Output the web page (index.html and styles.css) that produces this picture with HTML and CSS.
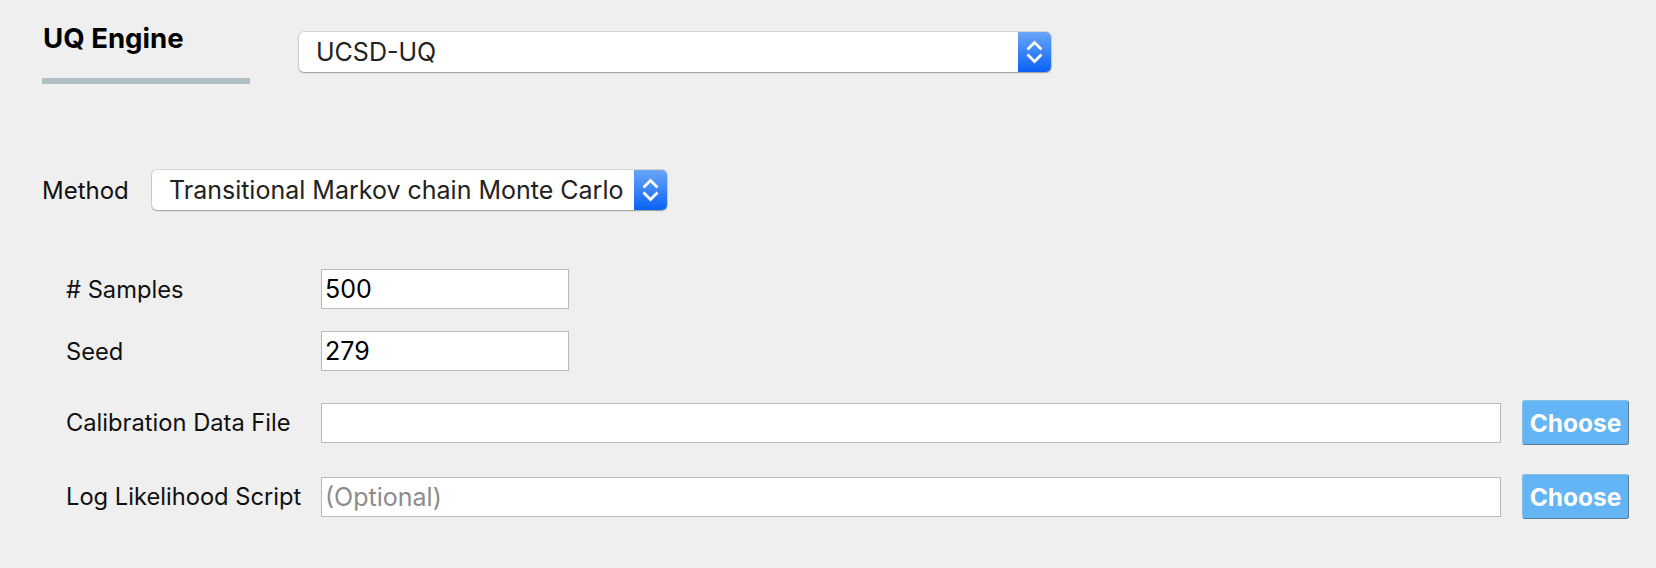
FILE: index.html
```html
<!DOCTYPE html>
<html lang="en">
<head>
<meta charset="utf-8">
<title>UQ Engine</title>
<link rel="stylesheet" href="styles.css">
</head>
<body>
<div class="page">
  <div class="header">
    <div class="tab">
      <div class="tab-title">UQ Engine</div>
      <div class="tab-bar"></div>
    </div>
    <div class="combo combo-engine">
      <span class="combo-text">UCSD-UQ</span>
      <span class="combo-arrows">
        <svg width="33" height="40" viewBox="0 0 33 40"><polyline points="9.5,17.5 16.5,10.5 23.5,17.5" fill="none" stroke="#fff" stroke-width="2.7"/><polyline points="9.5,22.5 16.5,29.5 23.5,22.5" fill="none" stroke="#fff" stroke-width="2.7"/></svg>
      </span>
    </div>
  </div>

  <div class="method-row">
    <span class="method-label">Method</span>
    <div class="combo combo-method">
      <span class="combo-text">Transitional Markov chain Monte Carlo</span>
      <span class="combo-arrows">
        <svg width="33" height="40" viewBox="0 0 33 40"><polyline points="9.5,17.5 16.5,10.5 23.5,17.5" fill="none" stroke="#fff" stroke-width="2.7"/><polyline points="9.5,22.5 16.5,29.5 23.5,22.5" fill="none" stroke="#fff" stroke-width="2.7"/></svg>
      </span>
    </div>
  </div>

  <div class="form">
    <div class="group group-short">
      <div class="row">
        <span class="label"># Samples</span>
        <div class="field field-short">500</div>
      </div>
      <div class="row">
        <span class="label">Seed</span>
        <div class="field field-short">279</div>
      </div>
    </div>
    <div class="group group-file">
      <div class="row row-file">
        <span class="label">Calibration Data File</span>
        <div class="field field-long"></div>
        <button class="choose">Choose</button>
      </div>
      <div class="row row-file">
        <span class="label">Log Likelihood Script</span>
        <div class="field field-long placeholder">(Optional)</div>
        <button class="choose">Choose</button>
      </div>
    </div>
  </div>
</div>
</body>
</html>
```
FILE: styles.css
```css
html, body {
  margin: 0;
  padding: 0;
  background: #efefef;
}
body {
  font-family: Inter, "Liberation Sans", sans-serif;
  color: #111;
  width: 1656px;
  height: 568px;
  overflow: hidden;
}
.page {
  display: flex;
  flex-direction: column;
}
.header {
  display: flex;
  align-items: flex-start;
  padding-left: 42px;
}
.tab {
  width: 208px;
  display: flex;
  flex-direction: column;
}
.tab-title {
  font-weight: 700;
  font-size: 27.6px;
  line-height: 33px;
  margin-top: 22px;
  padding-left: 1px;
  color: #000;
}
.tab-bar {
  height: 6px;
  background: #b0bec5;
  margin-top: 23px;
}
.combo {
  display: flex;
  align-items: center;
  height: 40px;
  background: #fff;
  border-radius: 5px;
  box-shadow: 0 0 0 1px rgba(0,0,0,0.10), 0 1px 1.5px rgba(0,0,0,0.28);
  overflow: hidden;
}
.combo-text {
  flex: 1;
  padding-left: 17px;
  font-size: 25px;
  color: #222;
  white-space: nowrap;
}
.combo-arrows {
  width: 33px;
  height: 40px;
  flex: none;
  background: linear-gradient(#6aa6f8, #0962f6);
}
.combo-arrows svg {
  display: block;
}
.combo-engine {
  width: 752px;
  margin-left: 49px;
  margin-top: 32px;
}
.method-row {
  display: flex;
  align-items: center;
  margin-top: 86px;
  padding-left: 42px;
}
.method-label {
  width: 110px;
  font-size: 24px;
  color: #111;
}
.combo-method {
  width: 515px;
}
.form {
  display: flex;
  flex-direction: column;
  gap: 29px;
  margin-top: 59px;
  padding-left: 66px;
}
.group {
  display: flex;
  flex-direction: column;
}
.group-short {
  gap: 22px;
}
.group-file {
  gap: 29px;
}
.row {
  display: flex;
  align-items: center;
}
.row-file {
  height: 45px;
}
.label {
  width: 255px;
  flex: none;
  font-size: 23.7px;
  color: #111;
}
.field {
  box-sizing: border-box;
  height: 40px;
  background: #fff;
  border: 1px solid #b9b9b9;
  padding-left: 3px;
  font-size: 25px;
  line-height: 38px;
  color: #000;
}
.field-short {
  width: 248px;
}
.field-long {
  width: 1180px;
}
.placeholder {
  color: #8c8c8c;
}
.choose {
  box-sizing: border-box;
  margin-left: 21px;
  width: 107px;
  height: 45px;
  padding: 0;
  background: #63b5f6;
  border: 1px solid #5a7d94;
  border-top-color: #86bfe2;
  border-left-color: #86bfe2;
  border-radius: 3px;
  color: #fff;
  font-family: Inter, "Liberation Sans", sans-serif;
  font-weight: 700;
  font-size: 24.5px;
}
```
